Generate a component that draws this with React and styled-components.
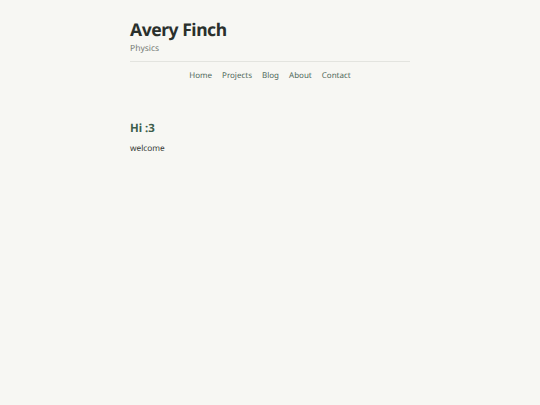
import React from 'react';
import styled, { createGlobalStyle } from 'styled-components';

const GlobalStyle = createGlobalStyle`
  html, body {
    margin: 0;
    padding: 0;
    background: #f7f7f3;
  }
  body {
    font-family: 'Noto Sans', 'Open Sans', sans-serif;
    color: #2b2f2c;
    text-rendering: geometricPrecision;
    -webkit-font-smoothing: antialiased;
  }
`;

const Page = styled.div`
  min-height: 405px;
  background: #f7f7f3;
`;

const Wrapper = styled.div`
  width: 280px;
  margin: 0 auto;
  padding-top: 18px;
`;

const Header = styled.header`
  padding-bottom: 6px;
  border-bottom: 1px solid #e3e4df;
`;

const SiteTitle = styled.h1`
  margin: 0;
  font-size: 17.5px;
  line-height: 25px;
  font-weight: 700;
  letter-spacing: -0.45px;
  color: #2a302c;
`;

const Tagline = styled.p`
  margin: 0;
  font-size: 8.5px;
  line-height: 12px;
  color: #767b76;
`;

const Nav = styled.nav`
  display: flex;
  justify-content: center;
  gap: 10px;
  padding-top: 8px;
`;

const NavLink = styled.a`
  font-size: 8px;
  line-height: 12px;
  color: #506a5b;
  text-decoration: none;
`;

const Main = styled.main`
  padding-top: 38px;
`;

const Heading = styled.h2`
  margin: 0;
  font-size: 11.4px;
  line-height: 17px;
  font-weight: 700;
  color: #3d5e4b;
`;

const Text = styled.p`
  margin: 6px 0 0;
  font-size: 8.3px;
  line-height: 12px;
  font-weight: 400;
  color: #363a36;
`;

const links = ['Home', 'Projects', 'Blog', 'About', 'Contact'];

export default function App() {
  return (
    <Page>
      <GlobalStyle />
      <Wrapper>
        <Header>
          <SiteTitle>Avery Finch</SiteTitle>
          <Tagline>Physics</Tagline>
        </Header>
        <Nav>
          {links.map((l) => (
            <NavLink key={l} href="#">{l}</NavLink>
          ))}
        </Nav>
        <Main>
          <Heading>Hi :3</Heading>
          <Text>welcome</Text>
        </Main>
      </Wrapper>
    </Page>
  );
}
